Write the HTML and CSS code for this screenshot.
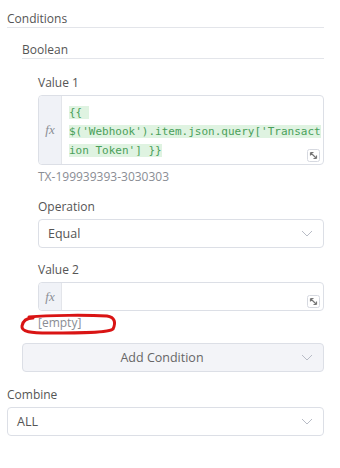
FILE: index.html
```html
<!DOCTYPE html>
<html lang="en">
<head>
    <meta charset="UTF-8">
    <meta name="viewport" content="width=device-width, initial-scale=1.0">
    <title>Conditions</title>
    <link rel="stylesheet" href="styles.css">
</head>
<body>
    <div class="panel">
        <div class="section-title">Conditions</div>
        <div class="collection">
            <div class="collection-title">Boolean</div>
            <div class="fields">
                <div class="field">
                    <div class="label">Value 1</div>
                    <div class="expr-input">
                        <div class="fx">fx</div>
                        <div class="expr-code">
                            <div class="code-line"><span>{{ </span></div>
                            <div class="code-line"><span>$('Webhook').item.json.query['Transact</span></div>
                            <div class="code-line"><span>ion Token'] }}</span></div>
                        </div>
                        <svg class="resize" width="13" height="13" viewBox="0 0 13 13">
                            <rect x="0.5" y="0.5" width="12" height="12" rx="2" fill="#fff" stroke="#d6d9e0"/>
                            <path d="M3.5 3.5 L9.5 9.5 M3.5 3.5 L3.5 6.5 M3.5 3.5 L6.5 3.5 M9.5 9.5 L9.5 6.5 M9.5 9.5 L6.5 9.5" stroke="#777" stroke-width="1.2" fill="none"/>
                        </svg>
                    </div>
                    <div class="hint">TX-199939393-3030303</div>
                </div>
                <div class="field">
                    <div class="label">Operation</div>
                    <div class="select">
                        <span>Equal</span>
                        <svg class="chevron" width="12" height="7" viewBox="0 0 12 7"><path d="M1 1 L6 6 L11 1" stroke="#b8bcc6" stroke-width="1" fill="none"/></svg>
                    </div>
                </div>
                <div class="field">
                    <div class="label">Value 2</div>
                    <div class="expr-input single">
                        <div class="fx">fx</div>
                        <div class="expr-code"></div>
                        <svg class="resize" width="13" height="13" viewBox="0 0 13 13">
                            <rect x="0.5" y="0.5" width="12" height="12" rx="2" fill="#fff" stroke="#d6d9e0"/>
                            <path d="M3.5 3.5 L9.5 9.5 M3.5 3.5 L3.5 6.5 M3.5 3.5 L6.5 3.5 M9.5 9.5 L9.5 6.5 M9.5 9.5 L6.5 9.5" stroke="#777" stroke-width="1.2" fill="none"/>
                        </svg>
                    </div>
                    <div class="hint">[empty]</div>
                </div>
            </div>
            <div class="add-button">
                <span>Add Condition</span>
                <svg class="chevron" width="12" height="7" viewBox="0 0 12 7"><path d="M1 1 L6 6 L11 1" stroke="#b8bcc6" stroke-width="1" fill="none"/></svg>
            </div>
        </div>
        <div class="field">
            <div class="label">Combine</div>
            <div class="select">
                <span>ALL</span>
                <svg class="chevron" width="12" height="7" viewBox="0 0 12 7"><path d="M1 1 L6 6 L11 1" stroke="#b8bcc6" stroke-width="1" fill="none"/></svg>
            </div>
        </div>
    </div>
    <svg class="annotation" width="100" height="24" viewBox="0 0 100 24">
        <path d="M10 4 C30 2 70 2 88 3 C96 4 97 10 94 16 C90 20 60 20 30 20 C12 20 2 19 3 13 C4 7 8 5 14 5" stroke="#d91414" stroke-width="3" fill="none" stroke-linecap="round"/>
    </svg>
</body>
</html>
```
FILE: styles.css
```css
body {
    margin: 0;
    background-color: #fff;
    font-family: "Open Sans", sans-serif;
    font-size: 12px;
    color: #555;
    position: relative;
}

.panel {
    padding: 10px 16px 0 7px;
}

.section-title {
    line-height: 17px;
    border-bottom: 1px solid #e3e5ea;
}

.collection {
    padding-left: 15px;
    margin-top: 13px;
}

.collection-title {
    line-height: 17px;
    border-bottom: 1px solid #e3e5ea;
}

.fields {
    padding-left: 16px;
    padding-top: 15px;
}

.field {
    margin-bottom: 13px;
}

.label {
    line-height: 17px;
    margin-bottom: 4px;
}

.expr-input {
    position: relative;
    display: flex;
    border: 1px solid #dcdfe6;
    border-radius: 4px;
    min-height: 67px;
}

.expr-input.single {
    min-height: 27px;
}

.fx {
    width: 22px;
    flex-shrink: 0;
    background-color: #f0f2f7;
    border-right: 1px solid #e3e5ea;
    border-radius: 4px 0 0 4px;
    display: flex;
    align-items: center;
    justify-content: center;
    font-family: "Liberation Serif", serif;
    font-style: italic;
    font-size: 13px;
    color: #8a8d94;
}

.expr-code {
    flex: 1;
    padding: 7px 4px 4px 7px;
    font-family: "DejaVu Sans Mono", monospace;
    font-size: 11px;
    line-height: 19px;
    color: #4aa05a;
}

.code-line span {
    white-space: pre;
    background-color: #dff3e1;
}

.resize {
    position: absolute;
    right: 3px;
    bottom: 2px;
}

.hint {
    color: #8a8d94;
    line-height: 16px;
    margin-top: 4px;
}

.fields .field:last-child {
    margin-bottom: 0;
}

.select {
    display: flex;
    align-items: center;
    justify-content: space-between;
    height: 27px;
    border: 1px solid #dcdfe6;
    border-radius: 4px;
    padding: 0 10px 0 9px;
    font-size: 12.5px;
}

.add-button {
    display: flex;
    align-items: center;
    height: 27px;
    border: 1px solid #dcdfe6;
    border-radius: 4px;
    background-color: #f3f4f8;
    padding: 0 10px 0 0;
    margin-top: 12px;
    margin-bottom: 14px;
    font-size: 12.5px;
    color: #666;
}

.add-button span {
    flex: 1;
    text-align: center;
}

.annotation {
    position: absolute;
    left: 19px;
    top: 313px;
}
```
